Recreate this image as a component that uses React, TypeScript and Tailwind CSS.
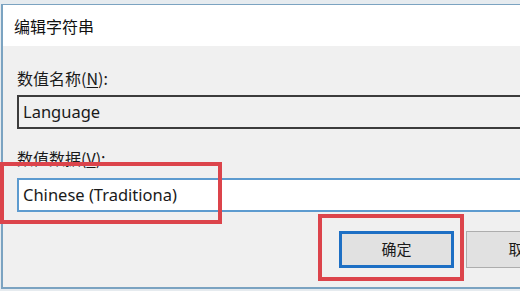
import React from 'react';

const cjk = { fontFamily: '"Noto Sans CJK SC", "Noto Sans", sans-serif' };
const latin = { fontFamily: '"Noto Sans", "Noto Sans CJK SC", sans-serif' };

const EditStringDialog = () => {
  return (
    <div className="relative w-[520px] h-[291px] overflow-hidden bg-[#e6ebef] pt-[4px] pl-[1px]">
      {/* Dialog window */}
      <div className="h-[285px] flex flex-col border-l-2 border-t border-b-2 border-[#7ba3c1]">
        {/* Title bar */}
        <div className="h-[41px] bg-white flex items-center pl-[11px] text-[16px] text-[#111]" style={cjk}>
          编辑字符串
        </div>

        {/* Body */}
        <div className="flex-1 bg-[#f0f0f0] flex flex-col pl-[14px] text-[#1a1a1a]">
          <div className="mt-[22px] h-[20px] leading-[20px] text-[16px]" style={cjk}>
            数值名称(<span className="underline underline-offset-2">N</span>):
          </div>
          <div className="mt-[7px] h-[34px] border-2 border-r-0 border-[#3c3c3c] bg-[#f0f0f0] flex items-center pl-[4px] text-[16.5px]" style={latin}>
            Language
          </div>

          <div className="mt-[19px] h-[20px] leading-[20px] text-[16px]" style={cjk}>
            数值数据(<span className="underline underline-offset-2">V</span>):
          </div>
          <div className="mt-[10px] h-[34px] border-y-2 border-l-2 border-[#5d9bcf] bg-white flex items-center pl-[4px] text-[16.5px]" style={latin}>
            Chinese (Traditiona)
          </div>

          {/* Buttons */}
          <div className="mt-[19px] flex gap-[12px] ml-[322px]">
            <div className="w-[115px] h-[37px] shrink-0 border-[3px] border-[#1d6fc4] bg-[#e1e1e1] flex items-center justify-center text-[15px]" style={cjk}>
              确定
            </div>
            <div className="w-[115px] h-[37px] shrink-0 border border-[#adadad] bg-[#e1e1e1] flex items-center justify-center text-[15px]" style={cjk}>
              取消
            </div>
          </div>
        </div>
      </div>

      {/* Red annotation boxes */}
      <div className="absolute left-0 top-[162px] w-[222px] h-[62px] border-4 border-[#dc444b]" />
      <div className="absolute left-[318px] top-[214px] w-[146px] h-[67px] border-4 border-[#dc444b]" />
    </div>
  );
};

export default EditStringDialog;
